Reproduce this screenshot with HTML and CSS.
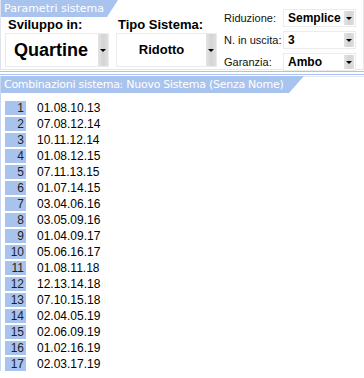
FILE: index.html
```html
<!DOCTYPE html>
<html lang="it">
<head>
    <meta charset="UTF-8">
    <title>Parametri sistema</title>
    <link rel="stylesheet" href="styles.css">
</head>
<body>
    <div class="params">
        <div class="params-main">
            <div class="tab tab-params">Parametri sistema</div>
            <div class="fields">
                <div class="field field-sviluppo">
                    <div class="field-label">Sviluppo in:</div>
                    <div class="combo combo-big">
                        <span class="combo-value">Quartine</span>
                        <span class="combo-btn"><i class="arrow"></i></span>
                    </div>
                </div>
                <div class="field field-tipo">
                    <div class="field-label">Tipo Sistema:</div>
                    <div class="combo combo-mid">
                        <span class="combo-value">Ridotto</span>
                        <span class="combo-btn"><i class="arrow"></i></span>
                    </div>
                </div>
            </div>
        </div>
        <div class="opts">
            <span class="opt-label">Riduzione:</span>
            <div class="combo combo-small">
                <span class="combo-value">Semplice</span>
                <span class="combo-btn"><i class="arrow"></i></span>
            </div>
            <span class="opt-label">N. in uscita:</span>
            <div class="combo combo-small">
                <span class="combo-value">3</span>
                <span class="combo-btn"><i class="arrow"></i></span>
            </div>
            <span class="opt-label">Garanzia:</span>
            <div class="combo combo-small">
                <span class="combo-value">Ambo</span>
                <span class="combo-btn"><i class="arrow"></i></span>
            </div>
        </div>
    </div>

    <div class="sep"></div>

    <div class="combos">
        <div class="combos-head">
            <div class="tab tab-combos">Combinazioni sistema: Nuovo Sistema (Senza Nome)</div>
        </div>
        <ul class="rows">
            <li><span class="num">1</span><span class="cmb">01.08.10.13</span></li>
            <li><span class="num">2</span><span class="cmb">07.08.12.14</span></li>
            <li><span class="num">3</span><span class="cmb">10.11.12.14</span></li>
            <li><span class="num">4</span><span class="cmb">01.08.12.15</span></li>
            <li><span class="num">5</span><span class="cmb">07.11.13.15</span></li>
            <li><span class="num">6</span><span class="cmb">01.07.14.15</span></li>
            <li><span class="num">7</span><span class="cmb">03.04.06.16</span></li>
            <li><span class="num">8</span><span class="cmb">03.05.09.16</span></li>
            <li><span class="num">9</span><span class="cmb">01.04.09.17</span></li>
            <li><span class="num">10</span><span class="cmb">05.06.16.17</span></li>
            <li><span class="num">11</span><span class="cmb">01.08.11.18</span></li>
            <li><span class="num">12</span><span class="cmb">12.13.14.18</span></li>
            <li><span class="num">13</span><span class="cmb">07.10.15.18</span></li>
            <li><span class="num">14</span><span class="cmb">02.04.05.19</span></li>
            <li><span class="num">15</span><span class="cmb">02.06.09.19</span></li>
            <li><span class="num">16</span><span class="cmb">01.02.16.19</span></li>
            <li><span class="num">17</span><span class="cmb">02.03.17.19</span></li>
        </ul>
    </div>
</body>
</html>
```

FILE: styles.css
```css
body {
    margin: 0;
    padding: 0;
    font-family: 'Liberation Sans', Arial, sans-serif;
    background-color: #fff;
    color: #000;
    overflow: hidden;
}

/* tab headers with the slanted right edge */
.tab {
    height: 17px;
    line-height: 17px;
    padding-left: 3px;
    font-family: 'DejaVu Sans', sans-serif;
    font-size: 11px;
    color: #fff;
    background-color: #a8c4ee;
    white-space: nowrap;
}

.tab-params {
    width: 114px;
    clip-path: polygon(0 0, 100% 0, calc(100% - 11px) 100%, 0 100%);
}

.tab-combos {
    width: 300px;
    letter-spacing: -0.27px;
    clip-path: polygon(0 0, 100% 0, calc(100% - 15px) 100%, 0 100%);
}

/* upper panel */
.params {
    display: flex;
    border-left: 1px solid #dfe4ec;
    border-right: 1px solid #e6e6e6;
    border-bottom: 1px solid #e2e6ee;
    box-sizing: border-box;
    height: 70px;
}

.params-main {
    width: 221px;
}

.fields {
    display: flex;
    padding-left: 4px;
    gap: 7px;
}

.field-label {
    height: 15px;
    line-height: 15px;
    font-size: 13px;
    font-weight: bold;
    padding-left: 3px;
}

.field-tipo .field-label {
    padding-left: 2px;
}

.combo {
    display: flex;
    border: 1px solid #ebebeb;
    background-color: #fff;
    box-sizing: border-box;
}

.combo-value {
    flex: 1;
    font-weight: bold;
    white-space: nowrap;
    overflow: hidden;
}

.combo-btn {
    width: 10px;
    display: flex;
    align-items: center;
    justify-content: center;
    background: linear-gradient(to right, #e4e4e4, #d4d4d4 50%, #dedede);
}

.arrow {
    width: 0;
    height: 0;
    border-left: 3px solid transparent;
    border-right: 3px solid transparent;
    border-top: 3px solid #000;
}

.combo-big {
    margin-top: 1px;
    width: 104px;
    height: 34px;
}

.combo-big .combo-value {
    font-size: 18px;
    line-height: 32px;
    padding-left: 8px;
}

.combo-mid {
    margin-top: 1px;
    width: 101px;
    height: 34px;
}

.combo-mid .combo-value {
    font-size: 13px;
    line-height: 32px;
    text-align: center;
}

.opts {
    display: grid;
    grid-template-columns: 59px 73px;
    grid-auto-rows: 18px;
    row-gap: 4px;
    padding-top: 9px;
    padding-left: 2px;
}

.opt-label {
    font-size: 11px;
    line-height: 18px;
    color: #111;
}

.combo-small .combo-value {
    font-size: 12px;
    line-height: 16px;
    padding-left: 4px;
}

.combo-small .combo-btn {
    margin: 1px 1px 1px 0;
}

/* double rule between the two panels */
.sep {
    margin-top: 1px;
    height: 2px;
    border-top: 1px solid #a8c4ee;
    border-bottom: 1px solid #a8c4ee;
}

/* lower panel */
.combos {
    border-left: 1px solid #c9d7ee;
    margin-top: 1px;
}

.combos-head {
    border-top: 1px solid #e4e8f0;
}

.combos-head .tab {
    margin-top: -1px;
}

.rows {
    list-style: none;
    margin: 0;
    padding: 8px 0 0 4px;
}

.rows li {
    display: flex;
    align-items: center;
    height: 14px;
    margin-bottom: 2px;
}

.num {
    width: 21px;
    height: 14px;
    line-height: 14px;
    text-align: right;
    padding-right: 2px;
    box-sizing: border-box;
    background-color: #a8c4ee;
    color: #222;
    font-size: 12px;
}

.cmb {
    padding-left: 11px;
    font-size: 12px;
}
```
